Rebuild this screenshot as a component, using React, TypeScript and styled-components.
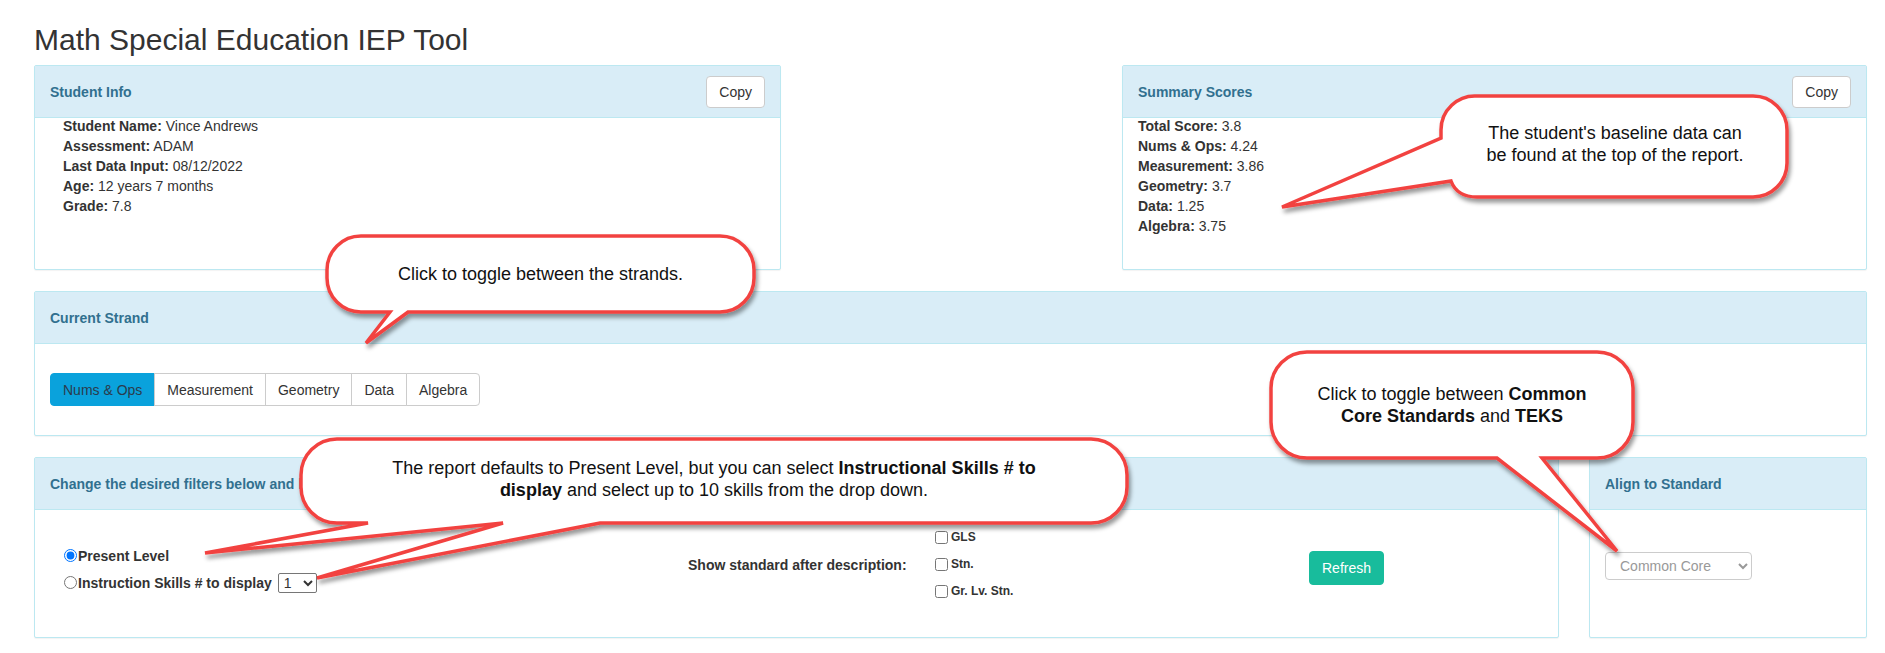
import React from "react";
import styled, { createGlobalStyle } from "styled-components";

type Pt = [number, number];

const studentInfo = [
  ["Student Name", "Vince Andrews"],
  ["Assessment", "ADAM"],
  ["Last Data Input", "08/12/2022"],
  ["Age", "12 years 7 months"],
  ["Grade", "7.8"],
];

const summaryScores = [
  ["Total Score", "3.8"],
  ["Nums & Ops", "4.24"],
  ["Measurement", "3.86"],
  ["Geometry", "3.7"],
  ["Data", "1.25"],
  ["Algebra", "3.75"],
];

const strands = ["Nums & Ops", "Measurement", "Geometry", "Data", "Algebra"];

// rounded box, tail points are inserted while walking the bottom edge right to left
function bubble(w: number, h: number, r: number, tail: Pt[]) {
  const pts = tail.map(([x, y]) => `L ${x} ${y}`).join(" ");
  return `M ${r} 0 H ${w - r} A ${r} ${r} 0 0 1 ${w} ${r} V ${h - r} A ${r} ${r} 0 0 1 ${w - r} ${h} ${pts} H ${r} A ${r} ${r} 0 0 1 0 ${h - r} V ${r} A ${r} ${r} 0 0 1 ${r} 0 Z`;
}

export default function App() {
  return (
    <>
      <GlobalStyle />
      <Page>
        <Title>Math Special Education IEP Tool</Title>

        <TopRow>
          <Panel>
            <PanelHeading>
              <PanelTitle>Student Info</PanelTitle>
              <CopyButton>Copy</CopyButton>
            </PanelHeading>
            <InfoBody>
              <InfoList $indent={13}>
                {studentInfo.map(([label, value]) => (
                  <li key={label}>
                    <b>{label}:</b> {value}
                  </li>
                ))}
              </InfoList>
            </InfoBody>
          </Panel>

          <Panel>
            <PanelHeading>
              <PanelTitle>Summary Scores</PanelTitle>
              <CopyButton>Copy</CopyButton>
            </PanelHeading>
            <InfoBody>
              <InfoList $indent={0}>
                {summaryScores.map(([label, value]) => (
                  <li key={label}>
                    <b>{label}:</b> {value}
                  </li>
                ))}
              </InfoList>
            </InfoBody>
          </Panel>
        </TopRow>

        <Panel $gap>
          <PanelHeading>
            <PanelTitle>Current Strand</PanelTitle>
          </PanelHeading>
          <StrandBody>
            <ButtonGroup>
              {strands.map((s, i) => (
                <StrandButton key={s} $active={i === 0}>
                  {s}
                </StrandButton>
              ))}
            </ButtonGroup>
          </StrandBody>
        </Panel>

        <BottomRow>
          <Panel>
            <PanelHeading>
              <PanelTitle>Change the desired filters below and hit Refresh to update the report.</PanelTitle>
            </PanelHeading>
            <FilterBody>
              <RadioGroup>
                <RadioRow>
                  <Radio type="radio" name="mode" defaultChecked />
                  Present Level
                </RadioRow>
                <RadioRow>
                  <Radio type="radio" name="mode" />
                  Instruction Skills # to display
                  <SkillSelect defaultValue="1">
                    {Array.from({ length: 10 }, (_, i) => (
                      <option key={i}>{i + 1}</option>
                    ))}
                  </SkillSelect>
                </RadioRow>
              </RadioGroup>
              <ShowLabel>Show standard after description:</ShowLabel>
              <CheckList>
                {["GLS", "Stn.", "Gr. Lv. Stn."].map((c) => (
                  <CheckRow key={c}>
                    <Check type="checkbox" />
                    {c}
                  </CheckRow>
                ))}
              </CheckList>
              <RefreshButton>Refresh</RefreshButton>
            </FilterBody>
          </Panel>

          <Panel>
            <PanelHeading>
              <PanelTitle>Align to Standard</PanelTitle>
            </PanelHeading>
            <AlignBody>
              <StandardSelect defaultValue="cc">
                <option value="cc">Common Core</option>
                <option value="teks">TEKS</option>
              </StandardSelect>
            </AlignBody>
          </Panel>
        </BottomRow>

        <Callout
          x={1443}
          y={96}
          w={344}
          h={101}
          dy={6}
          view={[-175, -10, 354, 125]}
          d="M 34 0 H 310 A 34 34 0 0 1 344 34 V 67 A 34 34 0 0 1 310 101 H 34 Q 14 101 8 85 L -161 111 L -2 42 V 34 A 34 34 0 0 1 34 0 Z"
        >
          The student's baseline data can
          <br />
          be found at the top of the report.
        </Callout>

        <Callout
          x={327}
          y={236}
          w={427}
          h={76}
          view={[-10, -10, 437, 120]}
          d={bubble(427, 76, 34, [[81, 76], [39, 107], [63, 76]])}
        >
          Click to toggle between the strands.
        </Callout>

        <Callout
          x={301}
          y={439}
          w={826}
          h={84}
          dy={4}
          view={[-110, -10, 836, 150]}
          d={bubble(826, 84, 36, [[299, 84], [16, 139], [202, 84], [-96, 114], [67, 84]])}
        >
          The report defaults to Present Level, but you can select <b>Instructional Skills # to</b>
          <br />
          <b>display</b> and select up to 10 skills from the drop down.
        </Callout>

        <Callout
          x={1271}
          y={352}
          w={362}
          h={106}
          view={[-10, -10, 372, 212]}
          d={bubble(362, 106, 36, [[271, 106], [346, 199], [226, 106]])}
        >
          Click to toggle between <b>Common</b>
          <br />
          <b>Core Standards</b> and <b>TEKS</b>
        </Callout>
      </Page>
    </>
  );
}

interface CalloutProps {
  x: number;
  y: number;
  w: number;
  h: number;
  d: string;
  dy?: number;
  view: [number, number, number, number];
  children: React.ReactNode;
}

let shadowCount = 0;

function Callout({ x, y, w, h, d, dy = 0, view, children }: CalloutProps) {
  const id = React.useMemo(() => `callout-shadow-${shadowCount++}`, []);
  const [minX, minY, maxX, maxY] = view;
  return (
    <CalloutWrap $x={x} $y={y} $w={w} $h={h}>
      <BubbleSvg
        $left={minX}
        $top={minY}
        width={maxX - minX}
        height={maxY - minY}
        viewBox={`${minX} ${minY} ${maxX - minX} ${maxY - minY}`}
      >
        <defs>
          <filter id={id} x="-20%" y="-20%" width="140%" height="150%">
            <feDropShadow dx="2" dy="4" stdDeviation="2" floodColor="#000" floodOpacity="0.4" />
          </filter>
        </defs>
        <path d={d} fill="#fff" stroke="#f24340" strokeWidth="3.5" strokeLinejoin="miter" filter={`url(#${id})`} />
      </BubbleSvg>
      <CalloutText $dy={dy}>
        <span>{children}</span>
      </CalloutText>
    </CalloutWrap>
  );
}

const GlobalStyle = createGlobalStyle`
  html, body {
    margin: 0;
    padding: 0;
    background: #fff;
  }
  body {
    font-family: "Liberation Sans", Arial, Helvetica, sans-serif;
    font-size: 14px;
    line-height: 20px;
    color: #333;
  }
  * {
    box-sizing: border-box;
  }
`;

const Page = styled.div`
  position: relative;
  width: 1885px;
  min-height: 653px;
  padding: 0 18px 0 34px;
  overflow: hidden;
`;

const Title = styled.h2`
  margin: 23px 0 9px;
  font-size: 30px;
  font-weight: 400;
  line-height: 33px;
  color: #333;
`;

const TopRow = styled.div`
  display: grid;
  grid-template-columns: 747px 745px;
  justify-content: space-between;
  margin-bottom: 21px;
`;

const BottomRow = styled.div`
  display: grid;
  grid-template-columns: 1fr 278px;
  column-gap: 30px;
`;

interface PanelProps {
  $gap?: boolean;
}

const Panel = styled.section<PanelProps>`
  border: 1px solid #bce8f1;
  border-radius: 2px;
  background: #fff;
  box-shadow: 0 1px 1px rgba(0, 0, 0, 0.05);
  margin-bottom: ${(p) => (p.$gap ? "21px" : "0")};
`;

const PanelHeading = styled.div`
  display: flex;
  align-items: center;
  justify-content: space-between;
  height: 52px;
  padding: 0 15px;
  background: #d9edf7;
  border-bottom: 1px solid #bce8f1;
  overflow: hidden;
`;

const PanelTitle = styled.h3`
  margin: 0;
  font-size: 14px;
  font-weight: bold;
  line-height: 20px;
  color: #31708f;
  white-space: nowrap;
`;

const CopyButton = styled.button`
  margin-top: 1px;
  height: 32px;
  padding: 0 12px;
  font-family: inherit;
  font-size: 14px;
  color: #333;
  background: #fff;
  border: 1px solid #ccc;
  border-radius: 4px;
`;

const InfoBody = styled.div`
  height: 153px;
  padding: 0 15px;
`;

interface InfoListProps {
  $indent: number;
}

const InfoList = styled.ul<InfoListProps>`
  list-style: none;
  margin: -2px 0 0;
  padding: 0 0 0 ${(p) => p.$indent}px;

  li {
    line-height: 20px;
  }
`;

const StrandBody = styled.div`
  padding: 29px 15px 29px;
`;

const ButtonGroup = styled.div`
  display: inline-flex;
`;

interface StrandButtonProps {
  $active?: boolean;
}

const StrandButton = styled.button<StrandButtonProps>`
  height: 33px;
  padding: 0 12px;
  margin-left: -1px;
  font-family: inherit;
  font-size: 14px;
  color: ${(p) => (p.$active ? "#2a3b4d" : "#333")};
  background: ${(p) => (p.$active ? "#0aa2dc" : "#fff")};
  border: 1px solid ${(p) => (p.$active ? "#0aa2dc" : "#ccc")};
  border-radius: 0;

  &:first-child {
    margin-left: 0;
    border-radius: 4px 0 0 4px;
  }
  &:last-child {
    border-radius: 0 4px 4px 0;
  }
`;

const FilterBody = styled.div`
  display: grid;
  grid-template-columns: 624px 247px 374px auto;
  align-items: center;
  height: 127px;
  padding: 10px 15px 29px 29px;
`;

const RadioGroup = styled.div`
  margin-top: 10px;
`;

const RadioRow = styled.label`
  display: flex;
  align-items: center;
  height: 27px;
  font-weight: bold;
  white-space: nowrap;
`;

const Radio = styled.input`
  width: 13px;
  height: 13px;
  margin: 0 1px 0 0;
`;

const SkillSelect = styled.select`
  width: 39px;
  height: 20px;
  margin-left: 6px;
  padding: 0 1px;
  font-family: inherit;
  font-size: 14px;
  color: #333;
  background: #fff;
  border: 1px solid #767676;
  border-radius: 2px;
`;

const ShowLabel = styled.div`
  margin-top: 2px;
  font-weight: bold;
  white-space: nowrap;
`;

const CheckList = styled.div`
  display: flex;
  flex-direction: column;
  margin-top: 0;
`;

const CheckRow = styled.label`
  display: flex;
  align-items: center;
  height: 27px;
  font-size: 12px;
  font-weight: bold;
  color: #333;
`;

const Check = styled.input`
  width: 13px;
  height: 13px;
  margin: 0 3px 0 0;
`;

const RefreshButton = styled.button`
  justify-self: start;
  margin-top: 7px;
  width: 75px;
  height: 34px;
  padding: 0;
  font-family: inherit;
  font-size: 14px;
  color: #fff;
  background: #18bc9c;
  border: 1px solid #18bc9c;
  border-radius: 4px;
`;

const AlignBody = styled.div`
  height: 127px;
  padding: 42px 15px 0;
`;

const StandardSelect = styled.select`
  width: 147px;
  height: 28px;
  padding: 0 10px;
  font-family: inherit;
  font-size: 14px;
  color: #999;
  background: #fff;
  border: 1px solid #ccc;
  border-radius: 4px;
`;

interface CalloutWrapProps {
  $x: number;
  $y: number;
  $w: number;
  $h: number;
}

const CalloutWrap = styled.div<CalloutWrapProps>`
  position: absolute;
  left: ${(p) => p.$x}px;
  top: ${(p) => p.$y}px;
  width: ${(p) => p.$w}px;
  height: ${(p) => p.$h}px;
  z-index: 10;
`;

interface BubbleSvgProps {
  $left: number;
  $top: number;
}

const BubbleSvg = styled.svg<BubbleSvgProps>`
  position: absolute;
  left: ${(p) => p.$left}px;
  top: ${(p) => p.$top}px;
  overflow: visible;
`;

interface CalloutTextProps {
  $dy: number;
}

const CalloutText = styled.div<CalloutTextProps>`
  position: relative;
  display: flex;
  align-items: center;
  justify-content: center;
  width: 100%;
  height: 100%;
  padding-bottom: ${(p) => p.$dy}px;
  font-size: 18px;
  line-height: 22px;
  color: #111;
  text-align: center;
  white-space: nowrap;
`;
